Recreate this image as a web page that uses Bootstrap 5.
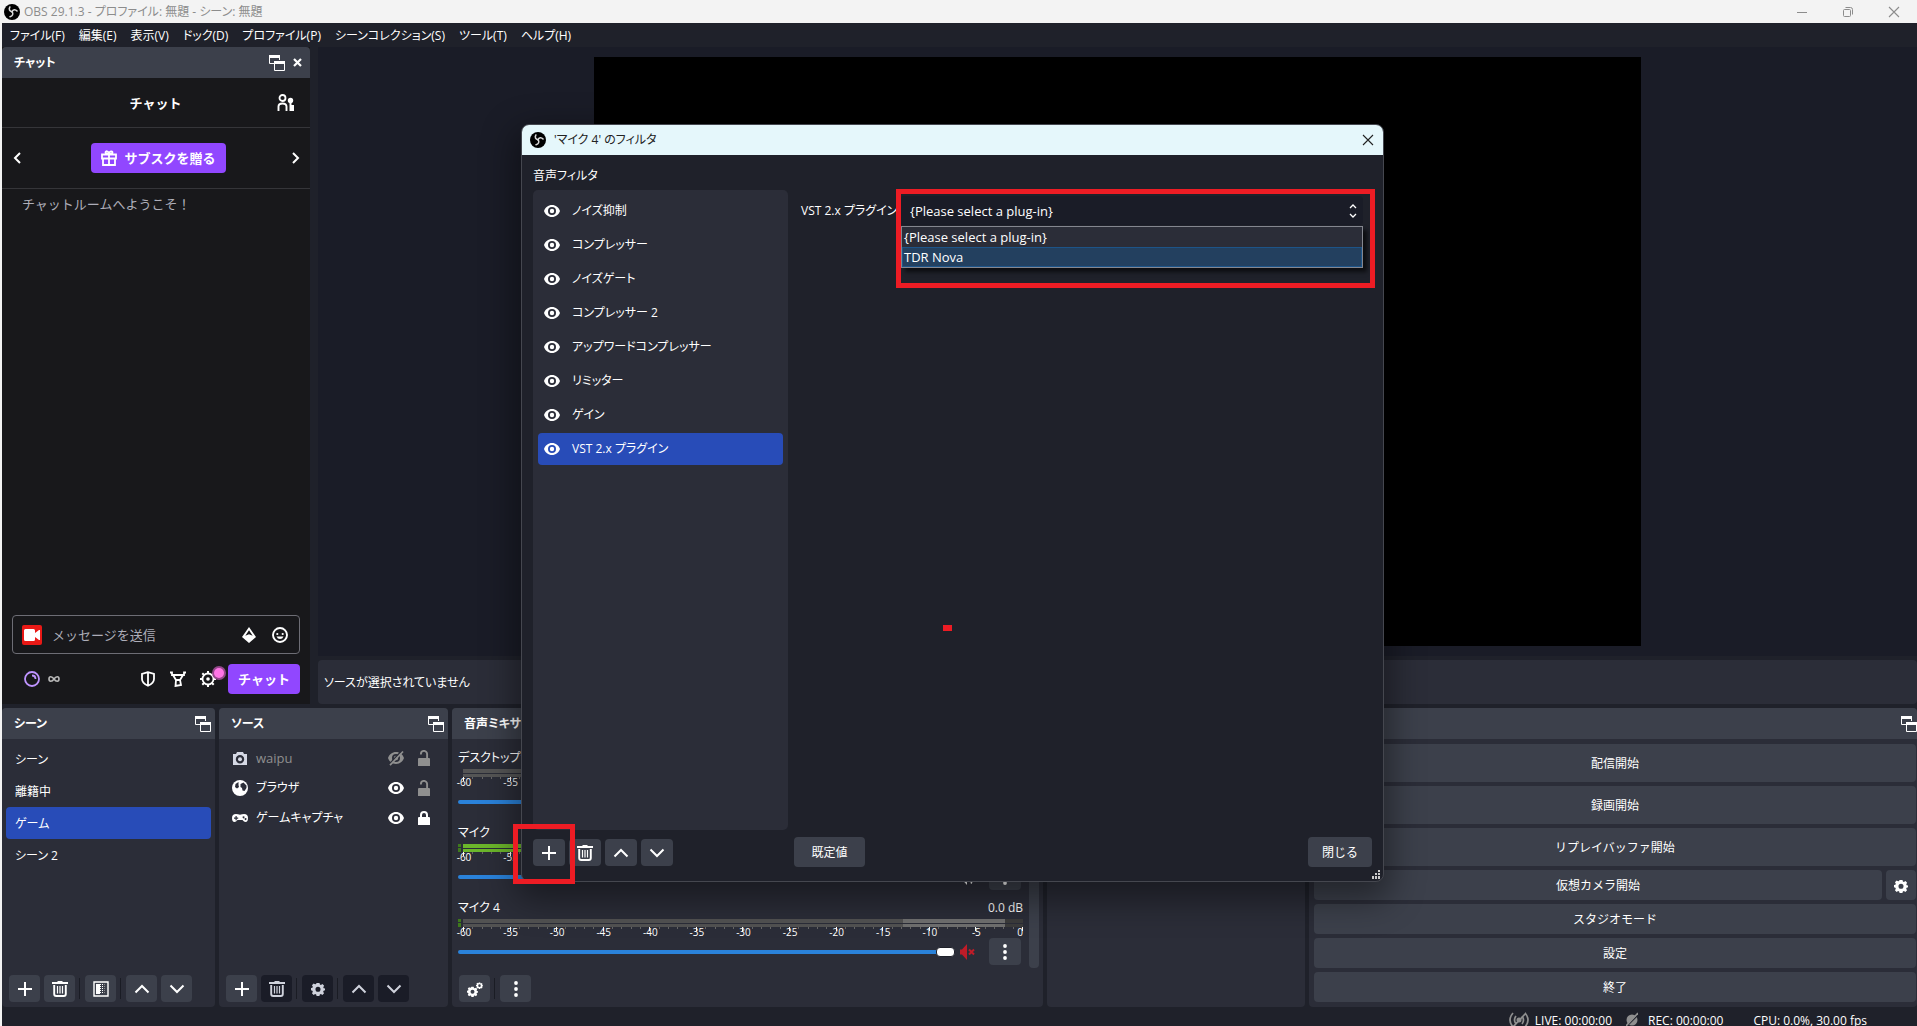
<!DOCTYPE html>
<html lang="ja">
<head>
<meta charset="utf-8">
<meta name="viewport" content="width=device-width, initial-scale=1">
<title>OBS 29.1.3</title>
<link href="https://cdn.jsdelivr.net/npm/bootstrap@5.3.0/dist/css/bootstrap.min.css" rel="stylesheet">
<style>
:root{--base:#1f212a;--panel:#2b2d38;--head:#3c404b;--deep:#1a1c27;--sel:#284cb8}
body{font-family:"Open Sans","Noto Sans CJK JP",sans-serif;font-size:12px;line-height:18px;font-feature-settings:"palt";background:#f3f3f3;color:#fff;min-height:100vh;overflow:hidden}
svg{display:block;fill:currentColor;flex:none}
svg.line{fill:none;stroke:currentColor}
.i16{width:16px;height:16px}
.titlebar{height:23px;color:#8c8c8c;padding-left:4px}
.winbtn{width:46px;height:20px;background:none;border:0;color:#8c8c8c;display:grid;place-items:center;padding:0}
.app{background:var(--base);margin-left:2px}
.menubar{height:24px;padding:2px 0 0 8px;gap:14px}
.menubar a{color:#fff;text-decoration:none}
.dockhead{height:31px;background:var(--head);border-radius:4px 4px 0 0;font-weight:600}
.dockhead h2{font-size:12px;line-height:18px;font-weight:600;margin:0;padding-top:1px}
.plain{background:none;border:0;color:inherit;padding:0}
.chat{width:308px;font-family:Inter,"Noto Sans CJK JP",sans-serif;font-size:13px;font-feature-settings:normal;background:#18181b}
.chat .dockhead{font-family:"Open Sans","Noto Sans CJK JP",sans-serif;font-feature-settings:"palt"}
.chatrow{border-bottom:1px solid #353539}
.chattop{height:50px;padding-left:56px}
.gift{height:61px;padding:0 10px 0 11px}
.welcome{margin:6px 20px auto;color:#adadb8}
.purple{background:#9147ff;color:#fff;border:0;border-radius:4px;height:30px;font-weight:700;font-size:13px}
.giftbtn{padding:0 10px;gap:7px}
.sendbtn{width:72px;padding:0}
.msg{height:39px;border:1px solid #6d6d75;border-radius:4px;margin:0 10px;padding:0 7px 0 9px}
.msg input{background:none;border:0;outline:0;color:#fff;font-size:13px;padding:0 0 0 2px;min-width:0}
.msg input::placeholder{color:#adadb8;opacity:1}
.sendrow{margin:10px;height:30px;padding-left:12px}
.modicons{gap:14px;margin-right:12px}
.reddot{width:10px;height:10px;border-radius:50%;background:#ff75e6;box-shadow:0 0 0 2px #93478a;right:-8px;top:-3px}
.preview{background:var(--deep);padding:10px}
.canvas{background:#000;aspect-ratio:16/9;height:calc(100vh - 437px)}
.context{height:44px;background:var(--panel);border-radius:4px;padding:2px 0 0 6px}
.docks{height:299px;gap:4px}
.dock{background:var(--panel);border-radius:4px;min-width:0}
.w-scenes{flex:213 1 0}.w-sources{flex:229 1 0}.w-mixer{flex:591 1 0}.w-trans{flex:258 1 0}.w-controls{flex:608 1 0}
.scene{height:32px;border-radius:4px;padding:2px 0 0 9px;color:#fff;text-decoration:none}
.picked{background:var(--sel)}
.srcrow{height:30px}
.sources{padding:4px 16px 0 13px}
.latin{font-size:13px}
.dim{color:#8f8f8f}
.tbtn{width:31px;height:27px;border:0;border-radius:4px;background:var(--head);color:#fff;display:grid;place-items:center;padding:0}
.tbtn.off{background:var(--deep);color:#cfd2dc}
.tsep{width:1px;height:21px;background:#1a1c24;margin:0 1px 0 0}
.tools{gap:4px;padding:0 0 5px 7px}
.chan{height:66px;margin-bottom:9px}
.meters{height:8px;padding-left:5px;display:grid;row-gap:1px;position:relative;margin-top:2px}
.meters i{background:#555}
.live i{background:#6cb72b}
.pk i{background:linear-gradient(90deg,#525252 78.5%,#707070 78.5% 96.8%,#3c3c3c 96.8%)}
.clip::before{content:"";position:absolute;left:0;top:0;width:3px;height:8px;background:linear-gradient(#3f7a1c 0 3px,transparent 3px 4px,#3f7a1c 4px)}
.ticks{height:4px;margin-left:5px;background:repeating-linear-gradient(90deg,#fff 0 1px,transparent 1px calc((100% - 1px)/12)) 0 0/100% 4px no-repeat,repeating-linear-gradient(90deg,#666 0 1px,transparent 1px calc((100% - 1px)/60)) 0 0/100% 2px no-repeat}
.nums{height:10px;margin:-3px 0 0 6px;font-size:10px;line-height:8px}
.nums span{width:0;display:flex;justify-content:center}
.nums span:last-child{justify-content:flex-end}
.fader{appearance:none;background:none;height:26px;margin:0;padding:0}
.fader::-webkit-slider-runnable-track{height:4px;background:#2a82da;border-radius:2px}
.fader::-webkit-slider-thumb{appearance:none;width:19px;height:10px;margin-top:-3px;background:#fff;border:1px solid #1f212a;border-radius:4px}
.fadrow{padding-right:2px}
.spk{margin:0 14px 0 4px}
.sbar{width:10px;border-radius:4px;background:var(--head);margin-bottom:7px}
.ctl{background:var(--head);border:0;border-radius:4px;color:#fff;height:30px;padding:2px 0 0}
.ctl.tall{height:38px}
.status{height:19px;padding:5px 50px 0 0;overflow:hidden;gap:6px}
.dialogwin{position:absolute;left:521px;top:124px;width:863px;height:758px;background:var(--base);border:1px solid #45474f;border-radius:8px;box-shadow:0 12px 34px 6px rgba(0,0,0,.42);z-index:5}
.dialogbar{height:30px;background:#e5f7fb;color:#222;border-radius:7px 7px 0 0;padding:0 7px 0 8px}
.dialogbar h1{font-size:12px;line-height:18px;font-weight:400;margin:0}
.dlgbody{padding:0 11px 14px}
.dlgleft{width:255px;margin-right:6px;padding-bottom:1px}
.dlglabel{height:35px;padding-top:6px}
.filters{background:var(--panel);border-radius:5px;padding:5px}
.filt{height:32px;margin-bottom:2px;border-radius:4px;padding-left:6px;gap:12px;color:#fff;text-decoration:none}
.dlgtools{margin-top:9px}
.dbtn{width:32px}
.vstrow{padding:41px 9px 0 7px;gap:7px}
.vstrow label{width:92px}
.combo{height:29px;background:var(--deep);border:0;border-radius:4px;color:#fff;appearance:none;padding-left:10px;width:100%;font-size:13px}
.popup{position:absolute;left:1px;right:0;top:30px;background:var(--panel);border:1px solid #84868f;box-shadow:4px 4px 4px rgba(0,0,0,.6);font-size:13px}
.popup li{height:20px;line-height:20px;padding-left:2px}
.popup .hov{background:#23405f;outline:1px solid #1d5488;outline-offset:-1px}
.mark-red{position:absolute;border:5px solid #ed1c24;z-index:7}
.m-combo{left:896px;top:189px;width:479px;height:99px}
.m-plus{left:513px;top:824px;width:62px;height:60px}
.m-dot{left:943px;top:625px;width:9px;height:6px;background:#ed1c24;border:0}
.grip{position:absolute;right:3px;bottom:2px;width:9px;height:9px}
</style>
</head>
<body class="d-flex flex-column position-relative">
<svg width="0" height="0" class="position-absolute" aria-hidden="true">
<symbol id="obs" viewBox="0 0 24 24"><circle cx="12" cy="12" r="12" fill="#000"/><g fill="none" stroke="#d8d8d8" stroke-width="2.3" stroke-linecap="round"><path d="M12 11.5C8.500 11 6.800 8 8.800 4.500"/><path d="M12 11.500C13.400 8 17 7.600 19.600 10.500"/><path d="M12 11.500C14.500 14.500 13 18 9 19"/></g></symbol>
<symbol id="pop" viewBox="0 0 16 16"><path d="M0 0h11v3H0z"/><path d="M.5 2v6.500H5M10.500 3v2" fill="none" stroke="currentColor"/><path d="M5 6h11v3H5z"/><path d="M5.500 8v7.500h10V8" fill="none" stroke="currentColor"/></symbol>
<symbol id="plus" viewBox="0 0 16 16"><path d="M7 1h2v6h6v2H9v6H7V9H1V7h6z"/></symbol>
<symbol id="bin" viewBox="0 0 16 16"><path d="M5.500 0h5v1H16v2H0V1h5.500z"/><path d="M2.200 4v9q0 2 2 2h7.600q2 0 2-2V4" fill="none" stroke="currentColor" stroke-width="1.900"/><path d="M5.500 5v7.500M8 5v7.500M10.500 5v7.500" stroke="currentColor" stroke-width="1.200"/></symbol>
<symbol id="up" viewBox="0 0 16 16"><path d="M1.500 11.500 8 5l6.500 6.500" fill="none" stroke="currentColor" stroke-width="2"/></symbol>
<symbol id="down" viewBox="0 0 16 16"><path d="M1.500 4.500 8 11l6.500-6.500" fill="none" stroke="currentColor" stroke-width="2"/></symbol>
<symbol id="eye" viewBox="0 0 16 16"><path fill-rule="evenodd" d="M8 2C4.200 2 1.200 4.500 0 8c1.200 3.500 4.200 6 8 6s6.800-2.500 8-6c-1.200-3.500-4.200-6-8-6zm0 2a4 4 0 1 1 0 8 4 4 0 0 1 0-8z"/><circle cx="8" cy="8" r="2.200"/></symbol>
<symbol id="gear" viewBox="0 0 16 16"><path fill-rule="evenodd" d="M6.300 1h3.400l.5 1.900 1.100.5 1.800-1 1.900 1.900-1 1.700.5 1.200L16 7.500v1.800l-1.600.8-.5 1.100 1 1.700-1.900 1.900-1.700-1-1.200.5L9.600 16H6.400l-.5-1.700-1.200-.5-1.700 1-1.900-1.900 1-1.700-.5-1.100L0 9.300V6.900l1.600-.4.500-1.200-1-1.700L3 1.700l1.700 1 1.100-.5zM8 5.400a2.900 2.900 0 1 0 0 5.800 2.900 2.900 0 0 0 0-5.800z"/></symbol>
<symbol id="dots" viewBox="0 0 16 16"><circle cx="8" cy="2" r="1.900"/><circle cx="8" cy="8" r="1.900"/><circle cx="8" cy="14" r="1.900"/></symbol>
<symbol id="unlock" viewBox="0 0 16 16"><path d="M2 9q0-1 1-1h10q1 0 1 1v7H2z"/><path d="M4.900 4.500V4a3.100 3.100 0 0 1 6.200 0v5" fill="none" stroke="currentColor" stroke-width="1.900"/></symbol>
<symbol id="lock" viewBox="0 0 16 16"><path d="M2 8q0-1 1-1h10q1 0 1 1v7H2z"/><path d="M5 8V5a3 3 0 0 1 6 0v3" fill="none" stroke="currentColor" stroke-width="2"/></symbol>
<symbol id="x" viewBox="0 0 16 16"><path d="M3 3l10 10M13 3 3 13" stroke="currentColor" stroke-width="1.100"/></symbol>
</svg>

<header class="titlebar d-flex align-items-center">
<svg class="i16 me-1"><use href="#obs"/></svg><span>OBS 29.1.3 - プロファイル: 無題 - シーン: 無題</span>
<div class="ms-auto d-flex">
<button class="winbtn" aria-label="最小化"><svg class="i16 line" viewBox="0 0 16 16"><path d="M3 8.500h10"/></svg></button>
<button class="winbtn" aria-label="元に戻す"><svg class="i16 line" viewBox="0 0 16 16"><rect x="3.500" y="5.500" width="7" height="7" rx="1"/><path d="M5.500 3.500h5q2 0 2 2v5"/></svg></button>
<button class="winbtn" aria-label="終了"><svg class="i16"><use href="#x"/></svg></button>
</div>
</header>

<div class="app d-flex flex-column flex-grow-1">
<nav class="menubar d-flex align-items-center">
<a href="#">ファイル(F)</a><a href="#">編集(E)</a><a href="#">表示(V)</a><a href="#">ドック(D)</a><a href="#">プロファイル(P)</a><a href="#">シーンコレクション(S)</a><a href="#">ツール(T)</a><a href="#">ヘルプ(H)</a>
</nav>

<div class="d-flex flex-grow-1 gap-2 mb-1">
<section class="chat d-flex flex-column">
<div class="dockhead d-flex align-items-center px-2 gap-2"><h2 class="ms-1 me-auto">チャット</h2><button class="plain" aria-label="フロート"><svg class="i16"><use href="#pop"/></svg></button><button class="plain" aria-label="閉じる"><svg width="9" height="9" viewBox="0 0 9 9"><path d="m1 1 7 7M8 1 1 8" stroke="currentColor" stroke-width="2.200"/></svg></button></div>
<div class="chatrow chattop d-flex align-items-center"><b class="flex-grow-1 text-center">チャット</b><button class="plain me-3 ms-4" aria-label="ユーザー"><svg width="17" height="17" viewBox="0 0 17 17"><circle cx="5.500" cy="4" r="3" fill="none" stroke="currentColor" stroke-width="1.800"/><path d="M1.500 17v-4.500q0-3 4-3t4 3V17" fill="none" stroke="currentColor" stroke-width="1.900"/><circle cx="13.500" cy="6.500" r="2.700"/><path d="M12.500 8h2v3H17v6h-4.500z"/></svg></button></div>
<div class="chatrow gift d-flex align-items-center justify-content-between">
<button class="plain" aria-label="前へ"><svg width="8" height="12" viewBox="0 0 8 12"><path d="M7 1 2 6l5 5" fill="none" stroke="currentColor" stroke-width="2"/></svg></button>
<button class="purple giftbtn d-flex align-items-center ms-1"><svg class="line" width="16" height="16" viewBox="0 0 16 16" stroke-width="1.800"><path d="M1 4.500h14v4H1zM2 8.500h12V15H2zM8 4.500V15M8 4C6 4 4.500 3.500 4.500 2.200S7.500.5 8 4c.5-3.500 3.500-3 3.500-1.800S10 4 8 4z"/></svg><span>サブスクを贈る</span></button>
<button class="plain" aria-label="次へ"><svg width="8" height="12" viewBox="0 0 8 12"><path d="m1 1 5 5-5 5" fill="none" stroke="currentColor" stroke-width="2"/></svg></button>
</div>
<p class="welcome">チャットルームへようこそ！</p>
<div class="msg d-flex align-items-center gap-2">
<svg width="20" height="20" viewBox="0 0 20 20"><rect width="20" height="20" rx="2" fill="#e91916"/><path d="M2 5.500Q2 4 3.500 4h8Q13 4 13 5.500V8l4-3h1v10h-1l-4-3v2.500q0 1.500-1.500 1.500h-8Q2 16 2 14.500z" fill="#fff"/></svg>
<input class="flex-grow-1" type="text" placeholder="メッセージを送信" aria-label="メッセージを送信">
<button class="plain me-1" aria-label="ビッツ"><svg width="14" height="16" viewBox="0 0 14 16"><path fill-rule="evenodd" d="m7 0 7 10-7 6-7-6zm0 3.200L3.300 8.800 7 7.300l3.700 1.500z"/></svg></button>
<button class="plain ms-1" aria-label="絵文字"><svg class="i16 me-1" viewBox="0 0 16 16"><circle cx="8" cy="8" r="7" fill="none" stroke="currentColor" stroke-width="1.900"/><circle cx="5.300" cy="7" r="1.100"/><circle cx="10.700" cy="7" r="1.100"/><path d="M4.500 9.500h7Q10.500 12 8 12T4.500 9.500z"/></svg></button>
</div>
<div class="sendrow d-flex align-items-center">
<svg class="i16" viewBox="0 0 16 16" style="color:#bf94ff"><circle cx="8" cy="8" r="7" fill="none" stroke="currentColor" stroke-width="1.800"/><path d="M8 4.500Q11.500 4.500 11.500 8" fill="none" stroke="currentColor" stroke-width="1.800"/></svg>
<svg class="ms-2" width="12" height="8" viewBox="0 0 12 8"><path d="M6 4C4 1 1 1 1 4s3 3 5 0 5-3 5 0-3 3-5 0z" fill="none" stroke="#bbb" stroke-width="1.600"/></svg>
<div class="modicons d-flex ms-auto">
<button class="plain" aria-label="シールド"><svg class="i16" viewBox="-1 0 16 16"><path d="M7 1.200 1 3v5q0 4 6 6.800Q13 12 13 8V3zM7 1v14" fill="none" stroke="currentColor" stroke-width="1.800"/></svg></button>
<button class="plain" aria-label="モデレーター"><svg class="i16" viewBox="0 0 16 16"><path d="M0 1.500h2V4h12V1.500h2M3 4l3 5h4l3-5M6 9l-.500 6 5.500-1L10 9" fill="none" stroke="currentColor" stroke-width="1.800"/></svg></button>
<button class="plain position-relative" aria-label="設定"><svg class="i16" viewBox="0 0 16 16"><circle cx="8" cy="8" r="5.500" fill="none" stroke="currentColor" stroke-width="1.800"/><path d="M8 0v3M8 13v3M0 8h3M13 8h3M2.300 2.300l2 2M11.700 11.700l2 2M2.300 13.700l2-2M11.700 4.300l2-2" stroke="currentColor" stroke-width="2"/><circle cx="8" cy="8" r="1.800"/></svg><span class="reddot position-absolute"></span></button>
</div>
<button class="purple sendbtn">チャット</button>
</div>
</section>
<main class="d-flex flex-column flex-grow-1 gap-1">
<div class="preview flex-grow-1 d-flex justify-content-center"><div class="canvas"></div></div>
<div class="context d-flex align-items-center">ソースが選択されていません</div>
</main>
</div>

<div class="docks d-flex">
<section class="dock w-scenes d-flex flex-column">
<div class="dockhead d-flex align-items-center justify-content-between ps-2 pe-1"><h2 class="ms-1">シーン</h2><button class="plain" aria-label="フロート"><svg class="i16"><use href="#pop"/></svg></button></div>
<div class="p-1 flex-grow-1">
<a href="#" class="scene d-flex align-items-center">シーン</a><a href="#" class="scene d-flex align-items-center">離籍中</a><a href="#" class="scene picked d-flex align-items-center">ゲーム</a><a href="#" class="scene d-flex align-items-center">シーン 2</a>
</div>
<div class="tools d-flex align-items-center">
<button class="tbtn" aria-label="追加"><svg class="i16"><use href="#plus"/></svg></button><button class="tbtn" aria-label="削除"><svg class="i16"><use href="#bin"/></svg></button><span class="tsep"></span>
<button class="tbtn" aria-label="フィルタ"><svg class="i16" viewBox="0 0 16 16"><path d="M1 1h14v14H1z" fill="none" stroke="currentColor" stroke-width="1.400"/><path d="M3 3h4v10H3z"/><path d="M7.500 3v10M9.500 3v10" stroke="currentColor" stroke-dasharray="1 1"/><path d="M11.500 3v10" stroke="#888" stroke-dasharray="1 1"/></svg></button><span class="tsep"></span>
<button class="tbtn" aria-label="上へ"><svg class="i16"><use href="#up"/></svg></button><button class="tbtn" aria-label="下へ"><svg class="i16"><use href="#down"/></svg></button>
</div>
</section>

<section class="dock w-sources d-flex flex-column">
<div class="dockhead d-flex align-items-center justify-content-between ps-2 pe-1"><h2 class="ms-1">ソース</h2><button class="plain" aria-label="フロート"><svg class="i16"><use href="#pop"/></svg></button></div>
<div class="sources flex-grow-1">
<div class="srcrow d-flex align-items-center gap-2 dim"><svg class="i16" viewBox="0 0 16 16" style="color:#d5d8e4"><path fill-rule="evenodd" d="M5 2h6l1 2h3v11H1V4h3zM8 5a4.200 4.200 0 1 0 0 8.400A4.200 4.200 0 0 0 8 5z"/><circle cx="8" cy="9.200" r="2"/></svg><span class="me-auto latin">waipu</span><svg class="i16" viewBox="0 0 16 16"><path fill-rule="evenodd" d="M8 2C4.200 2 1.200 4.500 0 8c1.200 3.500 4.200 6 8 6s6.800-2.500 8-6c-1.200-3.500-4.200-6-8-6zm0 2a4 4 0 1 1 0 8 4 4 0 0 1 0-8z"/><circle cx="8" cy="8" r="2.200"/><path d="M1 14.500 13.500 1" stroke="#2b2d38" stroke-width="1.500"/><path d="M2 15.200 15 1.500" stroke="currentColor" stroke-width="1.700"/></svg><svg class="i16 ms-1"><use href="#unlock"/></svg></div>
<div class="srcrow d-flex align-items-center gap-2"><svg class="i16" viewBox="0 0 16 16"><circle cx="8" cy="8" r="8"/><path d="M6.500 2 3.500 4 3 7l2 1.500L7 7l-.5-2zM8.500 4l3-1.500 3 3V8l-2 3-2-.5L10 8 8.500 7z" fill="#2b2d38"/></svg><span class="me-auto">ブラウザ</span><svg class="i16"><use href="#eye"/></svg><svg class="i16 ms-1 dim"><use href="#unlock"/></svg></div>
<div class="srcrow d-flex align-items-center gap-2"><svg class="i16" viewBox="0 0 16 16"><path fill-rule="evenodd" d="M4 4q2 0 4 .7Q10 4 12 4q4 0 4 4t-2.500 4Q12 12 10.500 10h-5Q4 12 2.500 12 0 12 0 8t4-4zM3.500 6v1.500H2v1.200h1.500v1.500h1.200V8.700h1.500V7.500H4.700V6zm8 .2a1 1 0 1 0 .1 0zm2 1.800a1 1 0 1 0 .1 0z"/></svg><span class="me-auto">ゲームキャプチャ</span><svg class="i16"><use href="#eye"/></svg><svg class="i16 ms-1"><use href="#lock"/></svg></div>
</div>
<div class="tools d-flex align-items-center">
<button class="tbtn" aria-label="追加"><svg class="i16"><use href="#plus"/></svg></button><button class="tbtn off" aria-label="削除"><svg class="i16"><use href="#bin"/></svg></button><span class="tsep"></span>
<button class="tbtn off" aria-label="プロパティ"><svg width="14" height="14"><use href="#gear"/></svg></button><span class="tsep"></span>
<button class="tbtn off" aria-label="上へ"><svg class="i16"><use href="#up"/></svg></button><button class="tbtn off" aria-label="下へ"><svg class="i16"><use href="#down"/></svg></button>
</div>
</section>

<section class="dock w-mixer d-flex flex-column">
<div class="dockhead d-flex align-items-center ps-2"><h2 class="ms-1">音声ミキサー</h2></div>
<div class="d-flex flex-grow-1" style="padding:10px 4px 0 6px">
<div class="flex-grow-1" style="margin-right:6px">
<div class="chan"><div class="d-flex justify-content-between"><label for="f1">デスクトップ音声</label><span>0.0 dB</span></div>
<div class="meters"><i></i><i></i></div><div class="ticks"></div>
<div class="nums d-flex justify-content-between"><span>-60</span><span>-55</span><span>-50</span><span>-45</span><span>-40</span><span>-35</span><span>-30</span><span>-25</span><span>-20</span><span>-15</span><span>-10</span><span>-5</span><span>0</span></div>
<div class="fadrow d-flex align-items-center"><input id="f1" class="fader flex-grow-1" type="range" value="100"><svg class="i16 spk"></svg><button class="tbtn dbtn" aria-label="メニュー"><svg class="i16"><use href="#dots"/></svg></button></div></div>
<div class="chan"><div class="d-flex justify-content-between"><label for="f2">マイク</label><span>0.0 dB</span></div>
<div class="meters live clip"><i></i><i></i></div><div class="ticks"></div>
<div class="nums d-flex justify-content-between"><span>-60</span><span>-55</span><span>-50</span><span>-45</span><span>-40</span><span>-35</span><span>-30</span><span>-25</span><span>-20</span><span>-15</span><span>-10</span><span>-5</span><span>0</span></div>
<div class="fadrow d-flex align-items-center"><input id="f2" class="fader flex-grow-1" type="range" value="100"><svg class="i16 spk" viewBox="0 0 16 16"><path d="M1 5.500h2L8 0v16l-5-5.500H1z"/><path d="M10 5q2 3 0 6M12 1.500q4 6.500 0 13" fill="none" stroke="currentColor" stroke-width="1.500"/></svg><button class="tbtn dbtn" aria-label="メニュー"><svg class="i16"><use href="#dots"/></svg></button></div></div>
<div class="chan mb-0"><div class="d-flex justify-content-between"><label for="f3">マイク 4</label><span>0.0 dB</span></div>
<div class="meters pk clip"><i></i><i></i></div><div class="ticks"></div>
<div class="nums d-flex justify-content-between"><span>-60</span><span>-55</span><span>-50</span><span>-45</span><span>-40</span><span>-35</span><span>-30</span><span>-25</span><span>-20</span><span>-15</span><span>-10</span><span>-5</span><span>0</span></div>
<div class="fadrow d-flex align-items-center"><input id="f3" class="fader flex-grow-1" type="range" value="100"><svg class="i16 spk" viewBox="0 0 16 16" style="color:#c01c28"><path d="M1 5.500h2L8 0v16l-5-5.500H1z"/><path d="m10 5.500 5 5M15 5.500l-5 5" stroke="currentColor" stroke-width="2"/></svg><button class="tbtn dbtn" aria-label="メニュー"><svg class="i16"><use href="#dots"/></svg></button></div></div>
</div>
<div class="sbar"></div>
</div>
<div class="tools d-flex align-items-center">
<button class="tbtn" aria-label="詳細設定"><svg class="i16" viewBox="0 0 16 16"><svg x="0" y="5" width="11" height="11"><use href="#gear"/></svg><svg x="9" y="1" width="7" height="7"><use href="#gear"/></svg></svg></button><span class="tsep"></span><button class="tbtn" aria-label="メニュー"><svg class="i16"><use href="#dots"/></svg></button>
</div>
</section>

<section class="dock w-trans"><div class="dockhead"></div></section>

<section class="dock w-controls d-flex flex-column">
<div class="dockhead d-flex align-items-center justify-content-end"><button class="plain" aria-label="フロート"><svg class="i16"><use href="#pop"/></svg></button></div>
<div class="d-flex flex-column gap-1" style="padding:5px 1px 0 5px">
<button class="ctl tall">配信開始</button><button class="ctl tall">録画開始</button><button class="ctl tall">リプレイバッファ開始</button>
<div class="d-flex gap-1"><button class="ctl flex-grow-1">仮想カメラ開始</button><button class="ctl d-grid" style="width:30px;place-items:center" aria-label="設定"><svg width="14" height="14"><use href="#gear"/></svg></button></div>
<button class="ctl">スタジオモード</button><button class="ctl">設定</button><button class="ctl">終了</button>
</div>
</section>
</div>

<footer class="status d-flex justify-content-end">
<svg class="dim" width="20" height="16" viewBox="0 0 20 16"><path d="M4 1q-6 7 0 14M7 4q-3 4 0 8M16 1q6 7 0 14M13 4q3 4 0 8M4 15 17 1" fill="none" stroke="currentColor" stroke-width="1.700"/><circle cx="10" cy="8" r="2.500"/></svg><span>LIVE: 00:00:00</span>
<svg class="dim ms-2" width="12" height="16" viewBox="0 0 12 16"><circle cx="6" cy="8" r="5.500"/><path d="M0 15 12 3" stroke="#1f212a" stroke-width="1.300"/><path d="M0 14 12 1" stroke="currentColor" stroke-width="1.600"/></svg><span class="ms-1">REC: 00:00:00</span>
<span class="ms-4">CPU: 0.0%, 30.00 fps</span>
</footer>
</div>

<div class="dialogwin d-flex flex-column" role="dialog" aria-labelledby="dt">
<div class="dialogbar d-flex align-items-center"><svg class="i16 me-1"><use href="#obs"/></svg><h1 id="dt" class="me-auto ps-1">'マイク 4' のフィルタ</h1><button class="plain" aria-label="閉じる"><svg class="i16"><use href="#x"/></svg></button></div>
<div class="dlgbody d-flex flex-grow-1">
<div class="dlgleft d-flex flex-column">
<div class="dlglabel d-flex align-items-center">音声フィルタ</div>
<div class="filters flex-grow-1">
<a href="#" class="filt d-flex align-items-center"><svg class="i16"><use href="#eye"/></svg>ノイズ抑制</a>
<a href="#" class="filt d-flex align-items-center"><svg class="i16"><use href="#eye"/></svg>コンプレッサー</a>
<a href="#" class="filt d-flex align-items-center"><svg class="i16"><use href="#eye"/></svg>ノイズゲート</a>
<a href="#" class="filt d-flex align-items-center"><svg class="i16"><use href="#eye"/></svg>コンプレッサー 2</a>
<a href="#" class="filt d-flex align-items-center"><svg class="i16"><use href="#eye"/></svg>アップワードコンプレッサー</a>
<a href="#" class="filt d-flex align-items-center"><svg class="i16"><use href="#eye"/></svg>リミッター</a>
<a href="#" class="filt d-flex align-items-center"><svg class="i16"><use href="#eye"/></svg>ゲイン</a>
<a href="#" class="filt picked d-flex align-items-center"><svg class="i16"><use href="#eye"/></svg>VST 2.x プラグイン</a>
</div>
<div class="dlgtools d-flex gap-1">
<button class="tbtn dbtn" aria-label="追加"><svg class="i16"><use href="#plus"/></svg></button><button class="tbtn dbtn" aria-label="削除"><svg class="i16"><use href="#bin"/></svg></button><button class="tbtn dbtn" aria-label="上へ"><svg class="i16"><use href="#up"/></svg></button><button class="tbtn dbtn" aria-label="下へ"><svg class="i16"><use href="#down"/></svg></button>
</div>
</div>
<div class="flex-grow-1 d-flex flex-column">
<div class="vstrow d-flex align-items-center"><label for="vst" class="text-nowrap">VST 2.x プラグイン</label>
<div class="flex-grow-1 position-relative"><select id="vst" class="combo"><option>{Please select a plug-in}</option><option>TDR Nova</option></select>
<svg class="position-absolute top-50 end-0 translate-middle-y me-1" width="12" height="14" viewBox="0 0 12 14"><path d="m3 4 3-3 3 3M3 10l3 3 3-3" fill="none" stroke="currentColor" stroke-width="1.300"/></svg>
<ul class="popup list-unstyled m-0"><li>{Please select a plug-in}</li><li class="hov">TDR Nova</li></ul></div></div>
<div class="mt-auto d-flex justify-content-between"><button class="ctl" style="width:71px">既定値</button><button class="ctl" style="width:64px">閉じる</button></div>
</div>
</div>
<svg class="grip" viewBox="0 0 9 9"><path d="M7 0h2v2H7zM7 3h2v2H7zM4 3h2v2H4zM7 6h2v3H7zM4 6h2v3H4zM1 6h2v3H1z" fill="#ccc"/></svg>
</div>

<div class="mark-red m-combo"></div><div class="mark-red m-plus"></div><div class="mark-red m-dot"></div>
<script src="https://cdn.jsdelivr.net/npm/bootstrap@5.3.0/dist/js/bootstrap.bundle.min.js"></script>
</body>
</html>
